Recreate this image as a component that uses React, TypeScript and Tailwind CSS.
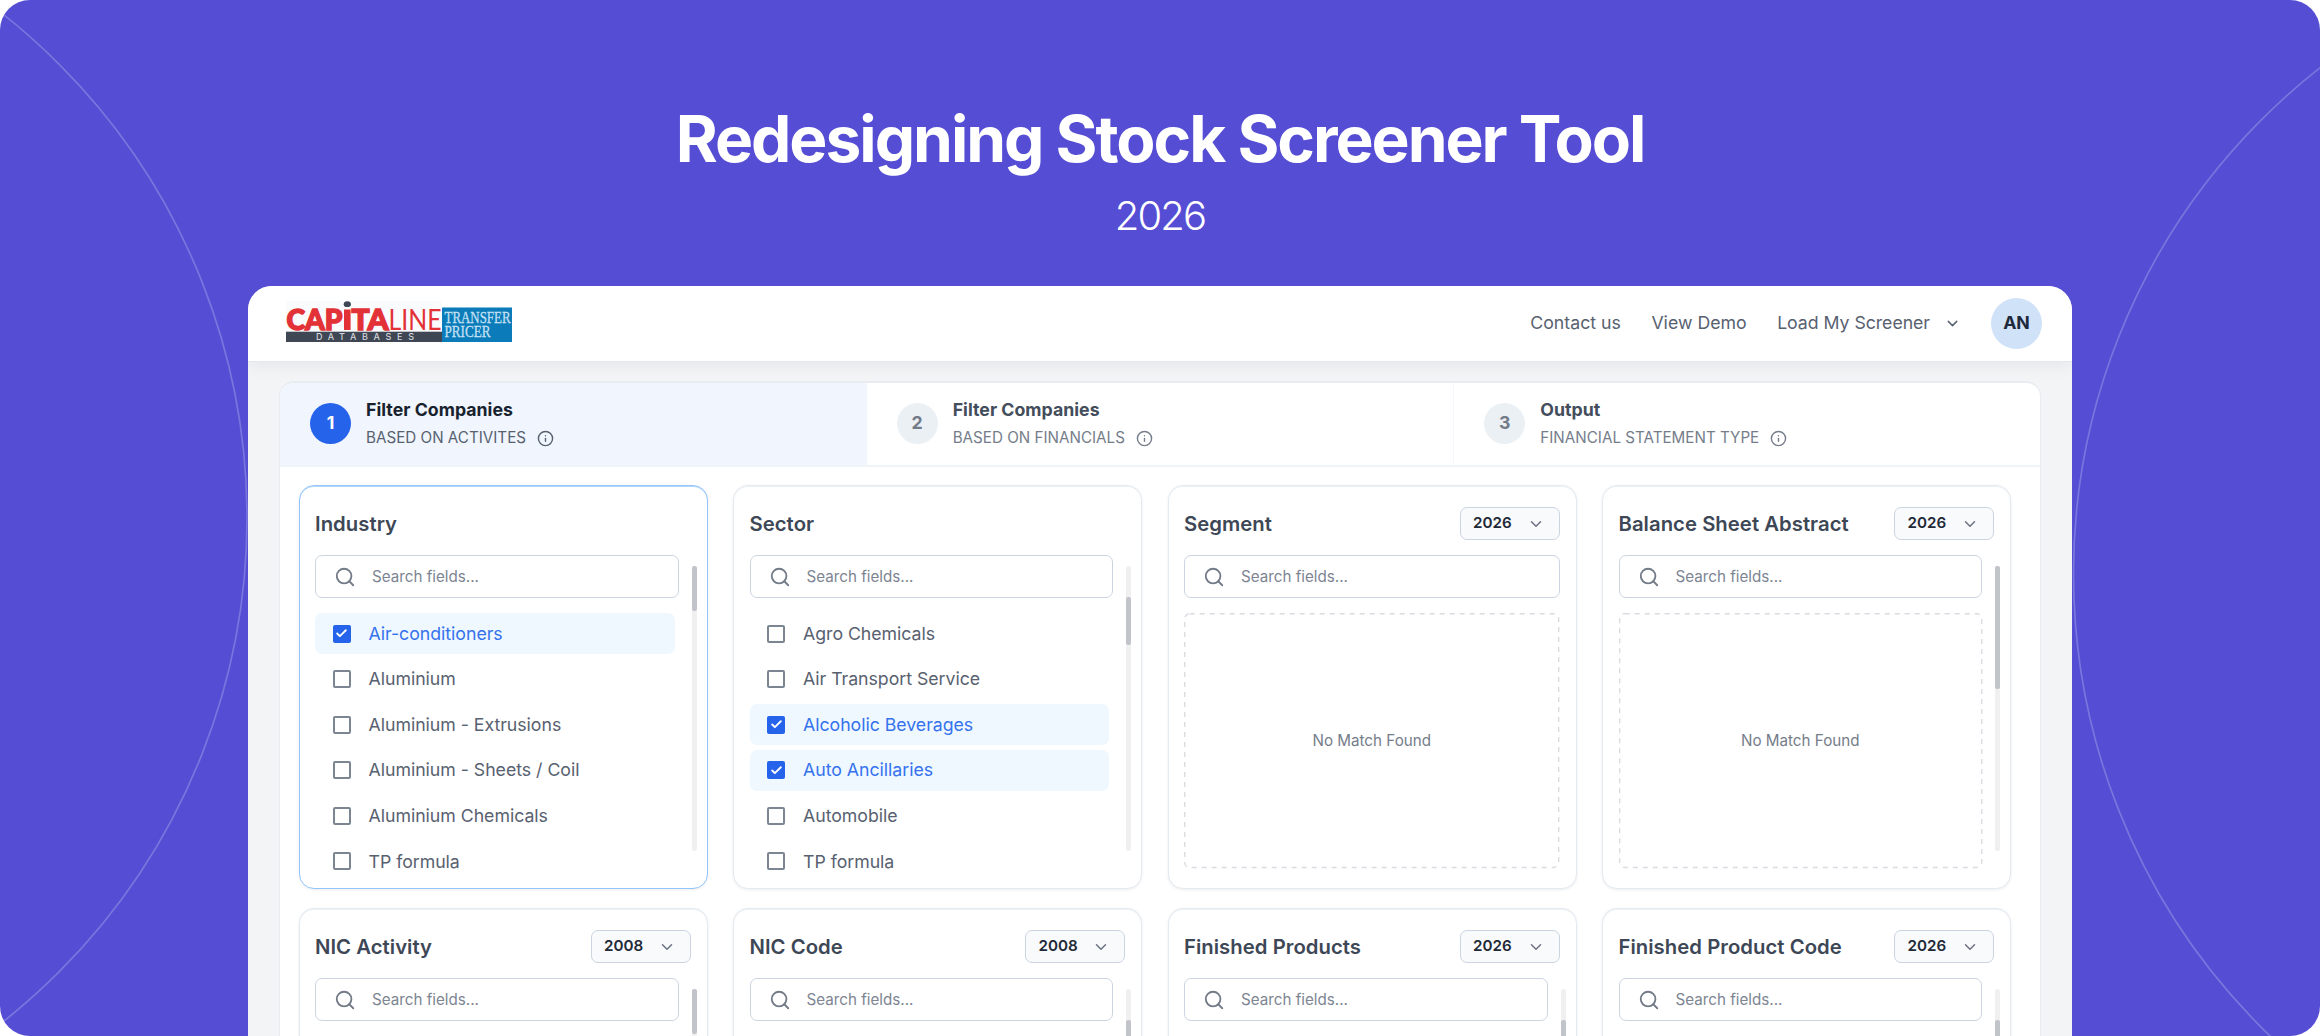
import React from 'react';
import { Check, ChevronDown, Info, Search } from 'lucide-react';

type Thumb = { top: number; height: number };

type Field = {
  title: string;
  year?: string;
  items?: { label: string; checked?: boolean }[];
  empty?: boolean;
  thumb?: Thumb;
  active?: boolean;
};

const steps = [
  { title: 'Filter Companies', sub: 'BASED ON ACTIVITES', active: true },
  { title: 'Filter Companies', sub: 'BASED ON FINANCIALS' },
  { title: 'Output', sub: 'FINANCIAL STATEMENT TYPE' },
];

const fields: Field[] = [
  {
    title: 'Industry',
    active: true,
    thumb: { top: 0, height: 45 },
    items: [
      { label: 'Air-conditioners', checked: true },
      { label: 'Aluminium' },
      { label: 'Aluminium - Extrusions' },
      { label: 'Aluminium - Sheets / Coil' },
      { label: 'Aluminium Chemicals' },
      { label: 'TP formula' },
    ],
  },
  {
    title: 'Sector',
    thumb: { top: 31, height: 48 },
    items: [
      { label: 'Agro Chemicals' },
      { label: 'Air Transport Service' },
      { label: 'Alcoholic Beverages', checked: true },
      { label: 'Auto Ancillaries', checked: true },
      { label: 'Automobile' },
      { label: 'TP formula' },
    ],
  },
  { title: 'Segment', year: '2026', empty: true },
  { title: 'Balance Sheet Abstract', year: '2026', empty: true, thumb: { top: 0, height: 123 } },
  { title: 'NIC Activity', year: '2008', thumb: { top: 0, height: 45 } },
  { title: 'NIC Code', year: '2008', thumb: { top: 31, height: 48 } },
  { title: 'Finished Products', year: '2026', thumb: { top: 31, height: 48 } },
  { title: 'Finished Product Code', year: '2026', thumb: { top: 31, height: 48 } },
];

const Logo: React.FC = () => (
  <svg width="226" height="41" viewBox="0 0 226 41">
    <rect width="156" height="31" fill="#fafbfc" />
    <rect y="30.7" width="156" height="10.3" fill="#3f4754" />
    <rect x="156" y="6.5" width="70" height="34.5" fill="#0b7cb9" />
    <g fill="#e33237" fontFamily="Lato, sans-serif">
      <text x="0.5" y="28.5" fontSize="28" fontWeight="900" stroke="#e33237" strokeWidth="1.4" textLength="56" lengthAdjust="spacingAndGlyphs">CAP</text>
      <rect x="58" y="8.5" width="6.6" height="20.5" />
      <text x="65.5" y="28.5" fontSize="28" fontWeight="900" stroke="#e33237" strokeWidth="1.4" textLength="37" lengthAdjust="spacingAndGlyphs">TA</text>
      <text x="102.5" y="28.8" fontSize="28.5" fontWeight="400" textLength="53" lengthAdjust="spacingAndGlyphs">LINE</text>
    </g>
    <ellipse cx="61.3" cy="3.2" rx="3.6" ry="2.9" fill="#3f4754" />
    <text x="30" y="39" fontSize="9" fontFamily="Inter, sans-serif" fontWeight="500" fill="#d3d6db" textLength="98">DATABASES</text>
    <g fill="#c5e0f5" fontFamily="'Liberation Serif', serif" stroke="#c5e0f5" strokeWidth="0.3">
      <text x="158.5" y="22.3" fontSize="17" textLength="66" lengthAdjust="spacingAndGlyphs">TRANSFER</text>
      <text x="158.5" y="36.4" fontSize="17" textLength="46" lengthAdjust="spacingAndGlyphs">PRICER</text>
    </g>
  </svg>
);

const Checkbox: React.FC<{ checked?: boolean }> = ({ checked }) =>
  checked ? (
    <span className="flex size-[18px] items-center justify-center rounded-[2px] bg-[#2563eb] text-white">
      <Check size={13} strokeWidth={3.4} />
    </span>
  ) : (
    <span className="size-[18px] rounded-[2px] border-2 border-[#7c8592]" />
  );

const FieldCard: React.FC<{ field: Field }> = ({ field }) => {
  const inset = field.thumb ? 'mr-3' : '';

  return (
    <div
      className={`relative flex h-[404px] flex-col rounded-[15px] border bg-white pt-[21px] pr-4 pl-[15.5px] ${
        field.active
          ? 'border-[#93c5fd] shadow-[inset_0_1px_0_#b5d7fc,0_1px_3px_rgba(15,23,42,0.08)]'
          : 'border-[#e4eaf1] shadow-[inset_0_1px_0_#edf2f7,0_1px_3px_rgba(15,23,42,0.08)]'
      }`}
    >
      <div className="flex h-[33px] items-center justify-between">
        <h2 className="text-[20.27px] leading-6 font-semibold tracking-[0.05px] text-[#3d4756]">{field.title}</h2>
        {field.year && (
          <div className="flex h-[33px] w-[100px] items-center justify-between rounded-[7px] border border-[#cbd5e1] bg-[#f8fafc] pr-[14px] pl-[12.5px]">
            <span className="text-[15.2px] font-semibold text-[#1f2937]">{field.year}</span>
            <ChevronDown size={18} strokeWidth={2} className="text-[#6b7280]" />
          </div>
        )}
      </div>

      <div className={`mt-[15px] flex h-[43px] shrink-0 items-center gap-[16px] rounded-[7px] border border-[#cbd5e1] pt-px pl-[18px] ${inset}`}>
        <Search size={22} strokeWidth={2} className="text-[#737b88]" />
        <span className="pt-px text-[15.2px] text-[#7d8592]">Search fields...</span>
      </div>

      {field.items && (
        <ul className="mt-[15px] mr-[16px] flex flex-col gap-[4.6px]">
          {field.items.map((item) => (
            <li
              key={item.label}
              className={`flex h-[41px] items-center gap-[18px] rounded-[7px] pl-[17.5px] text-[17.73px] tracking-[-0.03px] ${
                item.checked ? 'bg-[#eff8ff] text-[#3572ee]' : 'text-[#586170]'
              }`}
            >
              <Checkbox checked={item.checked} />
              <span className="pt-px">{item.label}</span>
            </li>
          ))}
        </ul>
      )}

      {field.empty && (
        <div className={`relative mt-[15px] flex h-[255px] items-center justify-center ${inset}`}>
          <svg className="absolute inset-0 h-full w-full overflow-visible">
            <rect x="0.7" y="0.7" width="99.6%" height="99.5%" rx="5" fill="none" stroke="#d9dce1" strokeWidth="1.4" strokeDasharray="5 5" />
          </svg>
          <span className="pt-[2px] text-[15.2px] text-[#757d8a]">No Match Found</span>
        </div>
      )}

      {field.thumb && (
        <div className="absolute top-[80px] right-[10px] h-[285px] w-[5px] rounded-full bg-[#f0f0f1]">
          <div className="rounded-[2px] bg-[#c1c4c9]" style={{ marginTop: field.thumb.top, height: field.thumb.height }} />
        </div>
      )}
    </div>
  );
};

export default function App() {
  return (
    <div className="h-[1036px] w-[2320px] bg-white font-['Inter',sans-serif]">
      <div className="relative flex h-full flex-col items-center overflow-hidden rounded-[30px] bg-[#554dd4]">
        {/* Decorative rings */}
        <svg className="absolute inset-0 h-full w-full" fill="none" stroke="#7b75de" strokeWidth="1.7">
          <circle cx="-395" cy="518" r="642" />
          <circle cx="2715.5" cy="573.6" r="642" />
        </svg>

        <div className="relative flex h-[286px] shrink-0 flex-col items-center pt-[107px] text-white">
          <h1 className="text-[64px] leading-[64px] font-bold tracking-[-0.0315em]">Redesigning Stock Screener Tool</h1>
          <p className="mt-[20.5px] text-[40px] leading-[48px] font-[350] tracking-[-0.045em]">2026</p>
        </div>

        <div className="relative flex w-[1824px] flex-1 flex-col overflow-hidden rounded-t-[24px] bg-[#f3f4f6]">
          <header className="relative flex h-[76px] shrink-0 items-center justify-between border-b border-[#e2e8f0] bg-white pr-[30px] pl-[38px] shadow-[0_4px_16px_rgba(0,0,0,0.06)]">
            <div className="mt-[-4px]">
              <Logo />
            </div>
            <nav className="flex items-center text-[17.73px] text-[#586170]">
              <span>Contact us</span>
              <span className="ml-[30.5px]">View Demo</span>
              <span className="ml-[30.5px] tracking-[-0.05px]">Load My Screener</span>
              <ChevronDown size={17} strokeWidth={2} className="ml-[14px]" />
              <span className="ml-[30px] flex size-[51px] items-center justify-center rounded-full bg-[#d0e2f8] font-bold text-[#1e293b]">AN</span>
            </nav>
          </header>

          <main className="mx-[31px] mt-[19px] flex h-[900px] shrink-0 flex-col overflow-hidden rounded-t-[15px] border border-t-2 border-[#e8ecf1] bg-white">
            <div className="grid h-[84px] shrink-0 grid-cols-3 border-b-2 border-[#eff4f9]">
              {steps.map((step, i) => (
                <div
                  key={step.sub}
                  className={`flex items-center gap-[15px] pl-[30px] ${
                    step.active ? 'bg-[#f1f6fe]' : i === 2 ? 'border-l border-[#f3f6fa]' : ''
                  }`}
                >
                  <span
                    className={`mt-[-1.5px] flex size-[41px] items-center justify-center rounded-full text-[17.73px] font-bold ${
                      step.active ? 'bg-[#2563eb] text-white' : 'bg-[#ebf0f5] text-[#737b88]'
                    }`}
                  >
                    {i + 1}
                  </span>
                  <div className="mt-[-2px]">
                    <div className={`text-[17.73px] leading-6 font-bold tracking-[0.02px] ${step.active ? 'text-[#18222f]' : 'text-[#434d5c]'}`}>
                      {step.title}
                    </div>
                    <div className={`mt-[6px] flex items-center gap-[11px] text-[15.2px] leading-5 ${step.active ? 'text-[#586170]' : 'text-[#757d8a]'}`}>
                      {step.sub}
                      <Info size={17} strokeWidth={2} />
                    </div>
                  </div>
                </div>
              ))}
            </div>

            <div className="grid grid-cols-[repeat(4,409px)] gap-x-[25.5px] gap-y-[19px] pt-[18px] pl-[18.5px]">
              {fields.map((field) => (
                <FieldCard key={field.title} field={field} />
              ))}
            </div>
          </main>
        </div>
      </div>
    </div>
  );
}
